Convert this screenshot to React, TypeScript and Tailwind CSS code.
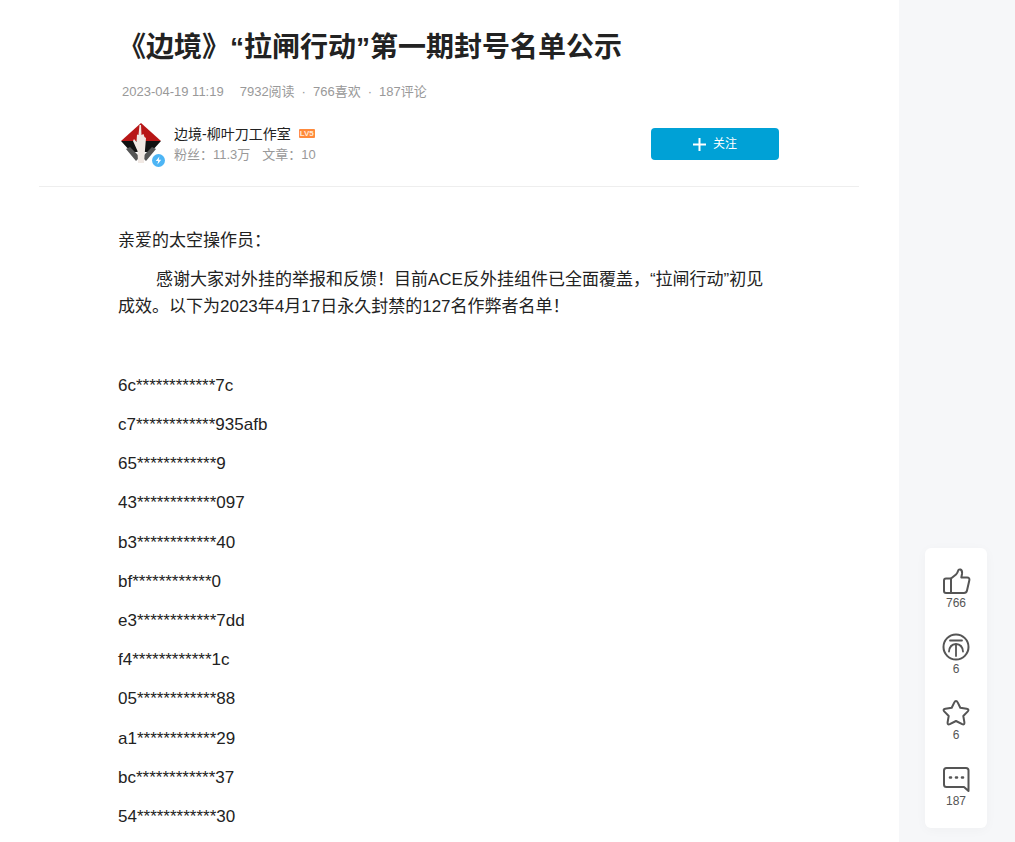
const FONT = "font-['Liberation_Sans','Noto_Sans_CJK_SC',sans-serif]";

const CHEATERS = [
  "6c************7c",
  "c7************935afb",
  "65************9",
  "43************097",
  "b3************40",
  "bf************0",
  "e3************7dd",
  "f4************1c",
  "05************88",
  "a1************29",
  "bc************37",
  "54************30",
];

function Avatar() {
  return (
    <div className="relative h-[44px] w-[44px] shrink-0">
      <svg width="44" height="44" viewBox="0 0 44 44">
        <circle cx="22" cy="22" r="22" fill="#fff" />
        <path d="M21 1 L41 19 H1 Z" fill="#b81717" />
        <path d="M1 19 H41 L31 30 H11 Z" fill="#111" />
        <path d="M6 27 L10 25 L20 35 L16 39 Z M36 27 L32 25 L22 35 L26 39 Z" fill="#555" />
        <path d="M18 41 L17.5 29 L13 19 L14 17 L16.5 20 L17 12.5 L18.5 13 L19.5 3 L21 3 L21.5 13 L23.5 12 L24.5 15 L26 16 L25 28 L24 41 Z" fill="#f1e9e4" />
      </svg>
      <div className="absolute bottom-[-1px] right-[-1px] flex h-[13px] w-[13px] items-center justify-center rounded-full bg-[#4db5f5] ring-1 ring-white">
        <svg width="9" height="9" viewBox="0 0 10 10">
          <path d="M6 0.5 L2 5.6 H4.6 L3.8 9.5 L8 4.2 H5.3 Z" fill="#fff" />
        </svg>
      </div>
    </div>
  );
}

function RailItem({ icon, count }: { icon: React.ReactNode; count: string }) {
  return (
    <div className="flex flex-col items-center">
      <div className="h-[30px] w-[30px]">{icon}</div>
      <span className="text-[12px] leading-[14px] text-[#555]">{count}</span>
    </div>
  );
}

const stroke = {
  fill: "none",
  stroke: "#555",
  strokeWidth: 2,
  strokeLinejoin: "round" as const,
  strokeLinecap: "round" as const,
};

export default function App() {
  return (
    <div className={`relative flex h-[842px] w-full overflow-hidden bg-[#f6f7f9] ${FONT}`}>
      <main className="h-full w-[899px] shrink-0 bg-white pt-[27px]">
        <div className="pl-[118px] pr-[120px]">
          <h1 className="text-[28px] font-bold leading-[42px] text-[#222]">
            《边境》“拉闸行动”第一期封号名单公示
          </h1>
          <div className="mt-[13px] flex pl-[4px] text-[13px] leading-[20px] text-[#999]">
            <span>2023-04-19 11:19</span>
            <span className="ml-[16px]">7932阅读</span>
            <span className="mx-[7px]">·</span>
            <span>766喜欢</span>
            <span className="mx-[7px]">·</span>
            <span>187评论</span>
          </div>
          <div className="mt-[20px] flex items-center pl-[2px]">
            <Avatar />
            <div className="ml-[10px] flex-1">
              <div className="flex items-center text-[14px] leading-[20px] text-[#222]">
                边境-柳叶刀工作室
                <span className="ml-[8px] rounded-[1px] bg-[#ff8a3c] px-[1px] text-[8px] font-bold leading-[9px] text-[#ffe9d8]">
                  LV5
                </span>
              </div>
              <div className="mt-[1px] text-[13px] leading-[20px] text-[#999]">
                粉丝：11.3万<span className="ml-[12px]">文章：10</span>
              </div>
            </div>
            <button className="flex h-[32px] w-[128px] items-center justify-center rounded-[4px] bg-[#00a1d6] text-[12px] text-white">
              <svg width="13" height="13" viewBox="0 0 13 13" className="mr-[7px]">
                <path d="M6.5 0 V13 M0 6.5 H13" stroke="#fff" strokeWidth="2" />
              </svg>
              关注
            </button>
          </div>
        </div>
        <div className="mx-[39px] mt-[20px] h-px w-[820px] bg-[#eee]" />
        <article className="mt-[40px] pl-[118px] pr-[119px] text-[17px] leading-[27.2px] text-[#222]">
          <p className="mb-[12px]">亲爱的太空操作员：</p>
          <p className="mb-[12px] indent-[38px]">
            感谢大家对外挂的举报和反馈！目前ACE反外挂组件已全面覆盖，“拉闸行动”初见成效。以下为2023年4月17日永久封禁的127名作弊者名单！
          </p>
          <div className="mb-[12px] h-[27.2px]" />
          {CHEATERS.map((c) => (
            <p key={c} className="mb-[12px]">
              {c}
            </p>
          ))}
        </article>
      </main>

      <aside className="absolute left-[925px] top-[548px] flex h-[280px] w-[62px] flex-col items-center gap-[22px] rounded-[6px] bg-white pt-[18px] shadow-[0_2px_12px_rgba(0,0,0,0.03)]">
        <RailItem
          count="766"
          icon={
            <svg width="30" height="30" viewBox="0 0 30 30" {...stroke}>
              <path d="M3 14.5 Q3 12.5 5 12.5 H10 V27 H5 Q3 27 3 25 Z" />
              <path d="M10 12.5 L15 8.5 Q16.5 7 17 5 Q17.5 3 19.5 3.5 Q21.5 4.5 21 8 L20.3 11.5 H26 Q29 11.5 28.3 14.5 L26 24.5 Q25.4 27 23 27 H10" />
            </svg>
          }
        />
        <RailItem
          count="6"
          icon={
            <svg width="30" height="30" viewBox="0 0 30 30" {...stroke}>
              <circle cx="15" cy="15" r="12.5" />
              <path d="M9 8.5 H21 M8 19.5 Q8.5 12.5 15 12 Q21.5 12.5 22 19.5 M15 12 V24" strokeWidth="1.8" />
            </svg>
          }
        />
        <RailItem
          count="6"
          icon={
            <svg width="30" height="30" viewBox="0 0 30 30" {...stroke}>
              <path d="M15 3 Q16 3 16.8 4.6 L19.3 9.8 L25.6 10.7 Q28.5 11.3 26.8 13.4 L22.3 18 L23.4 24.4 Q23.6 27.2 21.2 26.2 L15 23 L8.8 26.2 Q6.4 27.2 6.6 24.4 L7.7 18 L3.2 13.4 Q1.5 11.3 4.4 10.7 L10.7 9.8 L13.2 4.6 Q14 3 15 3 Z" />
            </svg>
          }
        />
        <RailItem
          count="187"
          icon={
            <svg width="30" height="30" viewBox="0 0 30 30" {...stroke}>
              <path d="M5.5 4 H25 Q27.5 4 27.5 6.5 V27 L23 23 H5.5 Q3 23 3 20.5 V6.5 Q3 4 5.5 4 Z" />
              <path d="M9 13.5 H10 M15 13.5 H16 M21 13.5 H22" strokeWidth="2.6" />
            </svg>
          }
        />
      </aside>
    </div>
  );
}
